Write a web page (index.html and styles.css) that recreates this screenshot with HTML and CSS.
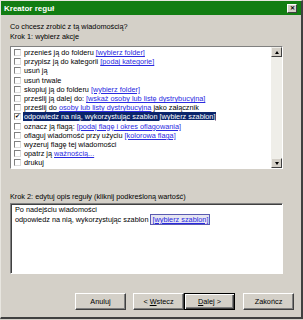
FILE: index.html
```html
<!DOCTYPE html>
<html>
<head>
<meta charset="utf-8">
<link rel="stylesheet" href="styles.css">
</head>
<body>
<div class="window">
  <div class="titlebar">
    <span class="title">Kreator reguł</span>
    <span class="close">✕</span>
  </div>
  <div class="content">
    <div class="label q">Co chcesz zrobić z tą wiadomością?</div>
    <div class="label step1">Krok 1: wybierz akcje</div>
    <div class="list">
      <div class="items">
        <div class="row"><span class="cb"></span><span class="txt">przenieś ją do folderu <a class="lk">[wybierz folder]</a></span></div>
        <div class="row"><span class="cb"></span><span class="txt">przypisz ją do kategorii <a class="lk">[podaj kategorie]</a></span></div>
        <div class="row"><span class="cb"></span><span class="txt">usuń ją</span></div>
        <div class="row"><span class="cb"></span><span class="txt">usuń trwale</span></div>
        <div class="row"><span class="cb"></span><span class="txt">skopiuj ją do folderu <a class="lk">[wybierz folder]</a></span></div>
        <div class="row"><span class="cb"></span><span class="txt">prześlij ją dalej do: <a class="lk">[wskaż osoby lub listę dystrybucyjna]</a></span></div>
        <div class="row"><span class="cb"></span><span class="txt">prześlij do <a class="lk">osoby lub listy dystrybucyjna</a> jako załącznik</span></div>
        <div class="row"><span class="cb checked">✔</span><span class="txt sel">odpowiedz na nią, wykorzystując szablon <a class="lk">[wybierz szablon]</a></span></div>
        <div class="row"><span class="cb"></span><span class="txt">oznacz ją flagą: <a class="lk">[podaj flagę i okres oflagowania]</a></span></div>
        <div class="row"><span class="cb"></span><span class="txt">oflaguj wiadomość przy użyciu <a class="lk">[kolorowa flaga]</a></span></div>
        <div class="row"><span class="cb"></span><span class="txt">wyzeruj flagę tej wiadomości</span></div>
        <div class="row"><span class="cb"></span><span class="txt">opatrz ją <a class="lk">ważnością...</a></span></div>
        <div class="row"><span class="cb"></span><span class="txt">drukuj</span></div>
      </div>
      <div class="scroll">
        <div class="sbtn"><span class="arrow up"></span></div>
        <div class="sbtn"><span class="arrow down"></span></div>
      </div>
    </div>
    <div class="label step2">Krok 2: edytuj opis reguły (kliknij podkreśloną wartość)</div>
    <div class="desc">
      <div>Po nadejściu wiadomości</div>
      <div>odpowiedz na nią, wykorzystując szablon <a class="lk boxed">[wybierz szablon]</a></div>
    </div>
    <div class="buttons">
      <button class="btn">Anuluj</button>
      <button class="btn">&lt; <u>W</u>stecz</button>
      <button class="btn def"><u>D</u>alej &gt;</button>
      <button class="btn last">Zakończ</button>
    </div>
  </div>
</div>
</body>
</html>
```

FILE: styles.css
```css
html, body {
  margin: 0;
  padding: 0;
  background: #d4d0c8;
}
body {
  width: 303px;
  height: 320px;
  overflow: hidden;
  font-family: "Liberation Sans", Arial, sans-serif;
  font-size: 7.3px;
  color: #000;
}
.window {
  box-sizing: border-box;
  width: 303px;
  height: 319px;
  border-top: 1px solid #e8e6e0;
  border-left: 1px solid #e8e6e0;
  border-right: 2px solid #404040;
  border-bottom: 2px solid #404040;
  background: #d4d0c8;
  display: flex;
  flex-direction: column;
}
.titlebar {
  height: 14px;
  background: #127d12;
  display: flex;
  align-items: center;
  justify-content: space-between;
  padding: 0 4px 0 3px;
}
.title {
  color: #fff;
  font-weight: bold;
  font-size: 8px;
}
.close {
  width: 10px;
  height: 9px;
  box-sizing: border-box;
  background: #d4d0c8;
  border: 1px solid;
  border-color: #fff #404040 #404040 #fff;
  font-size: 6px;
  font-weight: bold;
  line-height: 7px;
  text-align: center;
  color: #000;
}
.content {
  flex: 1;
  padding: 0 18px 0 9px;
  display: flex;
  flex-direction: column;
}
.label {
  height: 10px;
  line-height: 10px;
  white-space: nowrap;
  color: #000;
}
.q { margin-top: 7px; }
.list {
  margin-top: 4px;
  height: 123px;
  box-sizing: border-box;
  border: 1px solid;
  border-color: #808080 #fff #fff #808080;
  background: #fff;
  display: flex;
}
.items {
  flex: 1;
  padding-top: 1px;
  overflow: hidden;
}
.row {
  height: 9.2px;
  display: flex;
  align-items: center;
  white-space: nowrap;
  color: #000;
}
.cb {
  width: 7px;
  height: 7px;
  box-sizing: border-box;
  margin: 0 2px 0 3px;
  border: 1px solid;
  border-color: #808080 #dcdcdc #dcdcdc #808080;
  background: #fff;
  font-size: 6px;
  line-height: 5px;
  text-align: center;
  color: #000;
  flex: none;
}
.txt {
  padding: 0 1px;
  line-height: 9px;
}
.txt.sel {
  background: #0a246a;
  color: #fff;
}
.lk {
  color: #2a2adf;
  text-decoration: underline;
}
.sel .lk {
  color: #fff;
}
.scroll {
  width: 11px;
  background: #efeee9;
  display: flex;
  flex-direction: column;
  justify-content: space-between;
}
.sbtn {
  height: 10px;
  box-sizing: border-box;
  background: #d4d0c8;
  border: 1px solid;
  border-color: #f0efea #404040 #404040 #f0efea;
  display: flex;
  align-items: center;
  justify-content: center;
}
.arrow {
  width: 0;
  height: 0;
  border-left: 2.5px solid transparent;
  border-right: 2.5px solid transparent;
}
.arrow.up { border-bottom: 3px solid #000; }
.arrow.down { border-top: 3px solid #000; }
.step2 { margin-top: 23px; }
.desc {
  margin-top: 1px;
  height: 71px;
  box-sizing: border-box;
  border: 1px solid;
  border-color: #808080 #fff #fff #808080;
  box-shadow: inset 1px 1px 0 #404040;
  background: #fff;
  padding: 1px 4px;
  line-height: 10px;
  white-space: nowrap;
  color: #000;
}
.boxed {
  border: 1px solid #5a5ab0;
  background: #e6e6f2;
  padding: 0 1px;
}
.buttons {
  margin-top: 19px;
  margin-right: -11px;
  display: flex;
  justify-content: flex-end;
}
.btn {
  width: 51px;
  height: 17px;
  box-sizing: border-box;
  background: #d4d0c8;
  border: 1px solid;
  border-color: #fff #404040 #404040 #fff;
  box-shadow: inset -1px -1px 0 #808080;
  font-family: "Liberation Sans", Arial, sans-serif;
  font-size: 7.3px;
  color: #000;
  padding: 0;
  margin: 0 0 0 7px;
}
.btn.def {
  border: 1px solid #000;
  box-shadow: inset 1px 1px 0 #fff, inset -1px -1px 0 #404040, inset -2px -2px 0 #808080;
  margin-left: 0;
}
.btn.last { margin-left: 8px; }
```
